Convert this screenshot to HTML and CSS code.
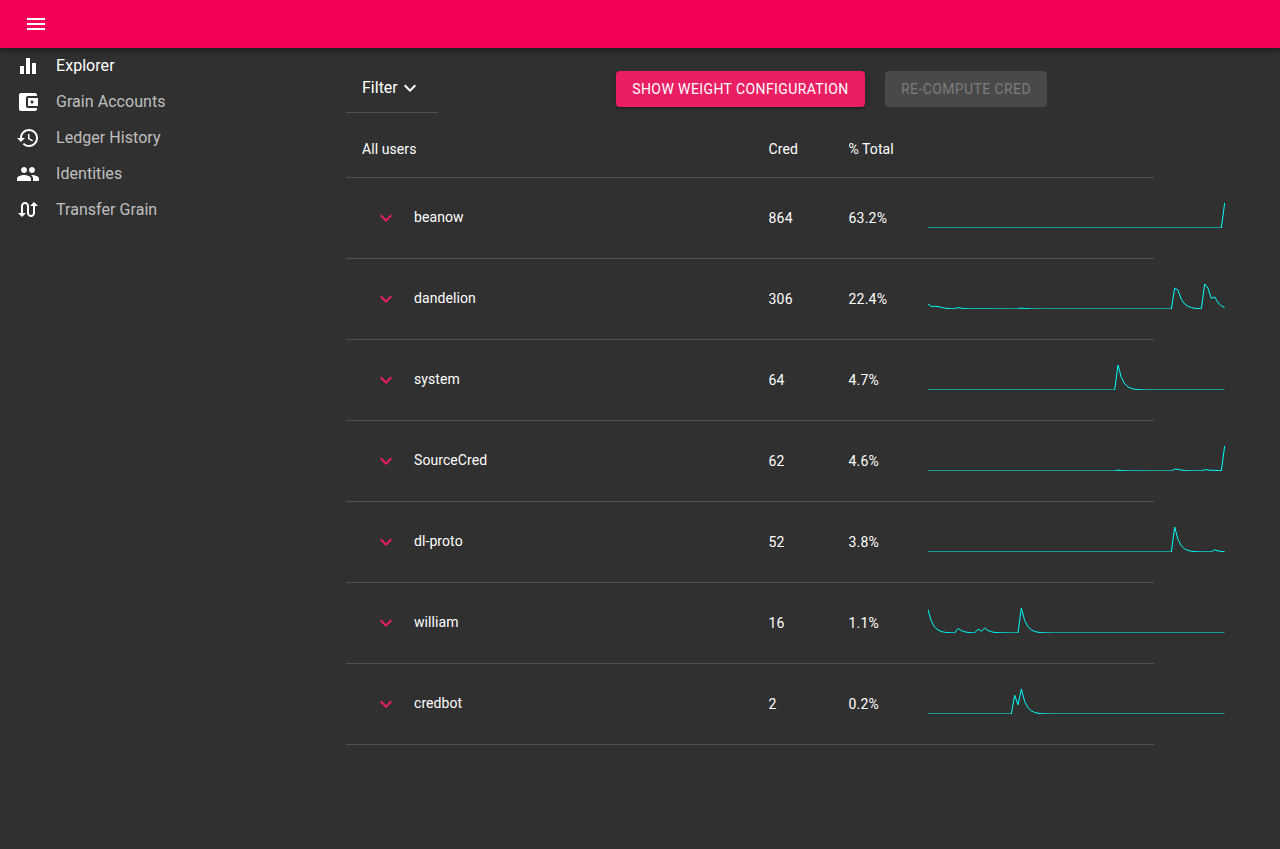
FILE: index.html
```html
<!DOCTYPE html>
<html lang="en">
<head>
<meta charset="utf-8">
<title>Explorer</title>
<link rel="stylesheet" href="styles.css">
</head>
<body>
<svg class="defs" width="0" height="0"><symbol id="chevron" viewBox="0 0 24 24"><path d="M7.41 8.59 12 13.17l4.59-4.58L18 10l-6 6-6-6z"/></symbol></svg>
<header class="appbar">
  <svg class="icon" viewBox="0 0 24 24"><path d="M3 18h18v-2H3v2zm0-5h18v-2H3v2zm0-7v2h18V6H3z"/></svg>
</header>
<div class="layout">
  <nav class="menu">
    <a class="menu-item active"><svg class="icon" viewBox="0 0 24 24"><path d="M10 20h4V4h-4v16zm-6 0h4v-8H4v8zM16 9v11h4V9h-4z"/></svg>Explorer</a>
    <a class="menu-item"><svg class="icon" viewBox="0 0 24 24"><path d="M21 18v1c0 1.100-.9 2-2 2H5c-1.110 0-2-.9-2-2V5c0-1.100.89-2 2-2h14c1.100 0 2 .9 2 2v1h-9c-1.110 0-2 .9-2 2v8c0 1.100.89 2 2 2h9zm-9-2h10V8H12v8zm4-2.500c-.83 0-1.500-.67-1.500-1.500s.67-1.500 1.500-1.500 1.500.67 1.500 1.500-.67 1.500-1.500 1.500z"/></svg>Grain Accounts</a>
    <a class="menu-item"><svg class="icon" viewBox="0 0 24 24"><path d="M13 3c-4.970 0-9 4.030-9 9H1l3.890 3.890.07.14L9 12H6c0-3.870 3.130-7 7-7s7 3.130 7 7-3.130 7-7 7c-1.930 0-3.680-.79-4.940-2.060l-1.420 1.420C8.270 19.990 10.510 21 13 21c4.970 0 9-4.030 9-9s-4.030-9-9-9zm-1 5v5l4.280 2.540.72-1.210-3.500-2.080V8H12z"/></svg>Ledger History</a>
    <a class="menu-item"><svg class="icon" viewBox="0 0 24 24"><path d="M16 11c1.660 0 2.990-1.340 2.990-3S17.660 5 16 5c-1.660 0-3 1.340-3 3s1.340 3 3 3zm-8 0c1.660 0 2.990-1.340 2.990-3S9.660 5 8 5C6.340 5 5 6.340 5 8s1.340 3 3 3zm0 2c-2.330 0-7 1.170-7 3.500V19h14v-2.500c0-2.330-4.670-3.500-7-3.500zm8 0c-.29 0-.62.02-.97.05 1.160.84 1.970 1.970 1.970 3.450V19h6v-2.500c0-2.330-4.670-3.500-7-3.500z"/></svg>Identities</a>
    <a class="menu-item"><svg class="icon" viewBox="0 0 24 24"><path d="M18 4l-4 4h3v7c0 1.100-.9 2-2 2s-2-.9-2-2V8c0-2.210-1.790-4-4-4S5 5.790 5 8v7H2l4 4 4-4H7V8c0-1.100.9-2 2-2s2 .9 2 2v7c0 2.210 1.790 4 4 4s4-1.790 4-4V8h3l-4-4z"/></svg>Transfer Grain</a>
  </nav>
  <main class="content">
    <div class="toolbar">
      <div class="filter">Filter<svg class="icon" viewBox="0 0 24 24"><use href="#chevron"/></svg></div>
      <div class="actions">
        <button class="button primary">Show weight configuration</button>
        <button class="button disabled" disabled>Re-compute Cred</button>
      </div>
    </div>
    <div class="table">
      <div class="row head"><span>All users</span><span>Cred</span><span>% Total</span></div>
      <div class="row">
        <span class="user"><svg class="icon" viewBox="0 0 24 24"><use href="#chevron"/></svg><b>beanow</b></span><span class="num">864</span><span class="num">63.2%</span>
        <svg class="spark" viewBox="0 0 90 25" preserveAspectRatio="none"><polyline points="0,25 88,25 89,0"/></svg>
      </div>
      <div class="row">
        <span class="user"><svg class="icon" viewBox="0 0 24 24"><use href="#chevron"/></svg><b>dandelion</b></span><span class="num">306</span><span class="num">22.4%</span>
        <svg class="spark" viewBox="0 0 90 25" preserveAspectRatio="none"><polyline points="0,20.2 1,22.4 2,22.3 3,22.600 4,23.4 5,24.1 6,24.500 7,24.7 8,24.8 9,23.600 10,24.2 11,24.600 12,24.8 14,24.9 17,24.8 20,24.9 27,25 28,24 29,24.500 30,24.7 31,24.9 34,25 73,25 74,4.2 75,6.2 76,15.400 77,20 78,22.3 79,23.600 80,24.3 81,24.600 82,24.8 83,0 84,4.2 85,14.500 86,12.9 87,18.7 88,21.8 89,23.500"/></svg>
      </div>
      <div class="row">
        <span class="user"><svg class="icon" viewBox="0 0 24 24"><use href="#chevron"/></svg><b>system</b></span><span class="num">64</span><span class="num">4.7%</span>
        <svg class="spark" viewBox="0 0 90 25" preserveAspectRatio="none"><polyline points="0,25 56,25 57,0 58,12.500 59,18.750 60,21.880 61,23.440 62,24.220 63,24.610 64,24.8 65,24.9 66,24.950 67,25 89,25"/></svg>
      </div>
      <div class="row">
        <span class="user"><svg class="icon" viewBox="0 0 24 24"><use href="#chevron"/></svg><b>SourceCred</b></span><span class="num">62</span><span class="num">4.6%</span>
        <svg class="spark" viewBox="0 0 90 25" preserveAspectRatio="none"><polyline points="0,25 56,25 57,24.1 58,24.500 59,24.7 60,24.9 73,25 74,23.1 75,23.400 76,24.1 77,24.500 78,24.8 82,24.9 83,23.7 84,23.9 85,24.400 86,24.3 87,24.600 88,24.8 89,0"/></svg>
      </div>
      <div class="row">
        <span class="user"><svg class="icon" viewBox="0 0 24 24"><use href="#chevron"/></svg><b>dl-proto</b></span><span class="num">52</span><span class="num">3.8%</span>
        <svg class="spark" viewBox="0 0 90 25" preserveAspectRatio="none"><polyline points="0,25 73,25 74,0 75,12.500 76,18.750 77,21.880 78,23.440 79,24.220 80,24.610 81,24.8 82,24.9 85,24.9 86,22.8 87,23.9 88,24.400 89,24.7"/></svg>
      </div>
      <div class="row">
        <span class="user"><svg class="icon" viewBox="0 0 24 24"><use href="#chevron"/></svg><b>william</b></span><span class="num">16</span><span class="num">1.1%</span>
        <svg class="spark" viewBox="0 0 90 25" preserveAspectRatio="none"><polyline points="0,1.500 1,13.250 2,19.120 3,22.060 4,23.530 5,24.270 6,24.630 7,24.8 8,24.9 9,20.500 10,22.7 11,23.8 12,24.400 13,24.7 14,24.8 15,21.2 16,23.2 17,20.1 18,22.500 19,23.8 20,24.400 21,24.7 22,24.8 24,24.9 27,25 28,0 29,12.500 30,18.750 31,21.880 32,23.440 33,24.220 34,24.610 35,24.8 36,24.9 38,25 89,25"/></svg>
      </div>
      <div class="row">
        <span class="user"><svg class="icon" viewBox="0 0 24 24"><use href="#chevron"/></svg><b>credbot</b></span><span class="num">2</span><span class="num">0.2%</span>
        <svg class="spark" viewBox="0 0 90 25" preserveAspectRatio="none"><polyline points="0,25 25,25 26,6.2 27,15.8 28,0 29,12.500 30,18.750 31,21.880 32,23.440 33,24.220 34,24.610 35,24.8 36,24.9 38,25 89,25"/></svg>
      </div>
    </div>
  </main>
</div>
</body>
</html>
```

FILE: styles.css
```css
* { box-sizing: border-box; }
body {
  margin: 0;
  min-height: 100vh;
  overflow: hidden;
  background: #303030;
  color: #fff;
  font: 400 14px/20px Roboto, sans-serif;
  letter-spacing: 0.08px;
}
.defs { display: none; }
.icon { width: 24px; height: 24px; fill: currentColor; flex: none; }
.appbar {
  height: 48px;
  padding: 0 24px;
  display: flex;
  align-items: center;
  background: #f50057;
  box-shadow: 0 2px 4px -1px rgba(0,0,0,.2), 0 4px 5px rgba(0,0,0,.14), 0 1px 10px rgba(0,0,0,.12);
}
.layout { display: flex; }
.menu { width: 346px; flex: none; }
.menu-item {
  height: 36px;
  padding-left: 16px;
  display: flex;
  align-items: center;
  gap: 16px;
  font-size: 16px;
  letter-spacing: 0.05px;
  color: rgba(255,255,255,.7);
}
.menu-item .icon { color: #fff; }
.menu-item.active { color: #fff; }
.content { width: 808px; flex: none; }
.toolbar { display: flex; height: 73px; }
.filter {
  width: 92px;
  height: 65px;
  padding: 15px 0 0 16px;
  display: flex;
  align-items: center;
  border-bottom: 1px solid #515151;
  font-size: 16px;
  letter-spacing: 0;
}
.actions { display: flex; gap: 20px; padding: 23px 0 0 178px; }
.button {
  height: 36px;
  padding: 0;
  border: 0;
  border-radius: 4px;
  font: 400 14px/24px Roboto, sans-serif;
  letter-spacing: .4px;
  text-transform: uppercase;
  white-space: nowrap;
}
.primary {
  width: 249px;
  background: #e91e63;
  color: #fff;
  box-shadow: 0 3px 1px -2px rgba(0,0,0,.2), 0 2px 2px rgba(0,0,0,.14), 0 1px 5px rgba(0,0,0,.12);
}
.disabled { width: 162px; background: #494949; color: #7c7c7c; }
.row {
  height: 81px;
  padding-left: 16px;
  display: grid;
  grid-template-columns: 406.500px 80px 79.500px 300px;
  align-items: center;
  border-bottom: 1px solid #515151;
}
.head { height: 57px; }
.num { letter-spacing: 0.22px; }
.user { display: flex; align-items: center; gap: 16px; padding-left: 12px; }
.user b { font-weight: 400; position: relative; top: -1px; }
.user .icon { color: #e91e63; }
.spark { width: 300px; height: 25px; overflow: hidden; margin-bottom: 5px; }
.spark polyline {
  fill: none;
  stroke: #00ffff;
  stroke-width: 1px;
  vector-effect: non-scaling-stroke;
}
```
